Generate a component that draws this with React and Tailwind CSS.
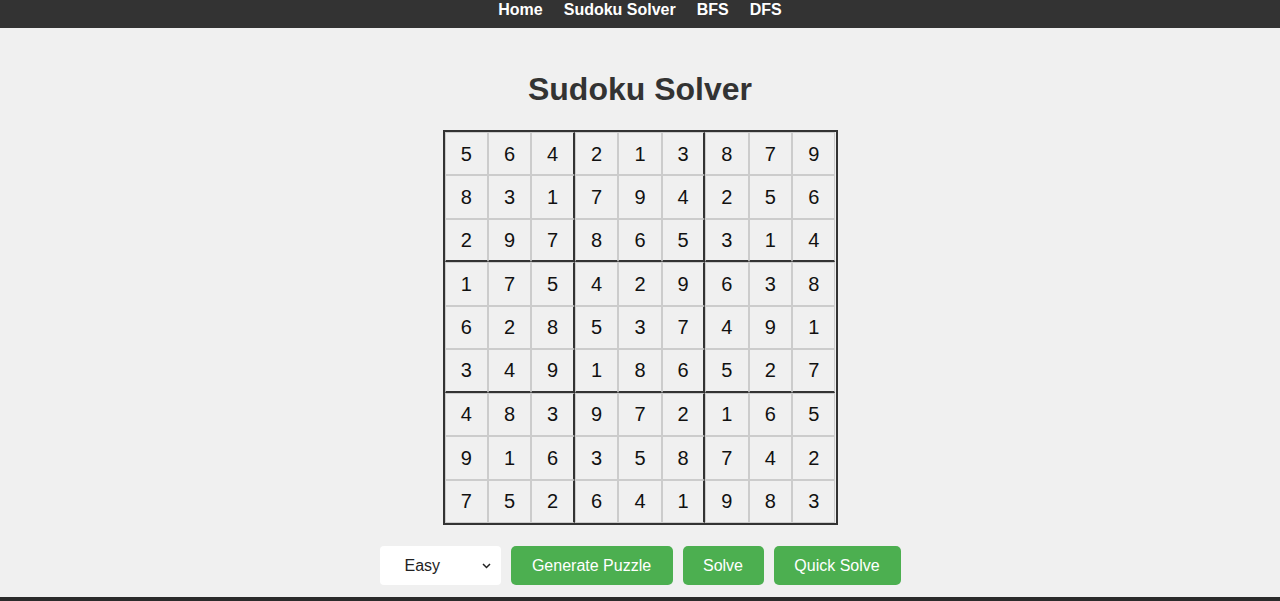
import { useState } from "react";

const PUZZLE = [
  [5, 6, 4, 2, 1, 3, 8, 7, 9],
  [8, 3, 1, 7, 9, 4, 2, 5, 6],
  [2, 9, 7, 8, 6, 5, 3, 1, 4],
  [1, 7, 5, 4, 2, 9, 6, 3, 8],
  [6, 2, 8, 5, 3, 7, 4, 9, 1],
  [3, 4, 9, 1, 8, 6, 5, 2, 7],
  [4, 8, 3, 9, 7, 2, 1, 6, 5],
  [9, 1, 6, 3, 5, 8, 7, 4, 2],
  [7, 5, 2, 6, 4, 1, 9, 8, 3],
];

const Cell = ({ value, row, col }) => {
  // thick lines between the 3x3 boxes
  const right = col === 2 || col === 5 ? "border-r-2 border-r-[#333]" : "";
  const bottom = row === 2 || row === 5 ? "border-b-2 border-b-[#333]" : "";

  return (
    <div
      className={`flex items-center justify-center border border-[#ccc] text-[20px] text-[#111] ${right} ${bottom}`}
    >
      {value}
    </div>
  );
};

const App = () => {
  const [level, setLevel] = useState("easy");

  return (
    <div className="min-h-[601px] bg-[#f0f0f0] flex flex-col font-['Liberation_Sans',Arial,sans-serif]">
      {/* Nav */}
      <nav className="h-[28px] bg-[#333] flex justify-center gap-[21px] pt-[1px] text-white font-bold text-[16px] leading-[18px]">
        <a href="#">Home</a>
        <a href="#">Sudoku Solver</a>
        <a href="#">BFS</a>
        <a href="#">DFS</a>
      </nav>

      <main className="flex-1 flex flex-col items-center pt-[43px]">
        <h1 className="text-[32px] leading-[37px] font-bold text-[#333] mb-[22px]">
          Sudoku Solver
        </h1>

        {/* Board */}
        <div className="w-[395px] h-[395px] border-2 border-[#333] grid grid-cols-9 grid-rows-9">
          {PUZZLE.map((r, i) =>
            r.map((v, j) => <Cell key={`${i}-${j}`} value={v} row={i} col={j} />)
          )}
        </div>

        {/* Controls */}
        <div className="flex gap-[10px] mt-[21px] mb-[12px]">
          <div className="relative">
            <select
              value={level}
              onChange={(e) => setLevel(e.target.value)}
              className="appearance-none w-[121px] h-[39px] bg-white rounded-[4px] pl-[25px] text-[16px] text-[#222] outline-none"
            >
              <option value="easy">Easy</option>
              <option value="medium">Medium</option>
              <option value="hard">Hard</option>
            </select>
            <svg
              className="absolute right-[10px] top-[17px] pointer-events-none"
              width="9"
              height="6"
              viewBox="0 0 9 6"
              fill="none"
            >
              <path d="M1 1l3.5 3.5L8 1" stroke="#222" strokeWidth="1.5" />
            </svg>
          </div>
          <button className="w-[162px] h-[39px] bg-[#4caf50] text-white text-[16px] rounded-[5px]">
            Generate Puzzle
          </button>
          <button className="w-[81px] h-[39px] bg-[#4caf50] text-white text-[16px] rounded-[5px]">
            Solve
          </button>
          <button className="w-[127px] h-[39px] bg-[#4caf50] text-white text-[16px] rounded-[5px]">
            Quick Solve
          </button>
        </div>
      </main>

      <footer className="h-[4px] bg-[#2b2b2b]" />
    </div>
  );
};

export default App;
